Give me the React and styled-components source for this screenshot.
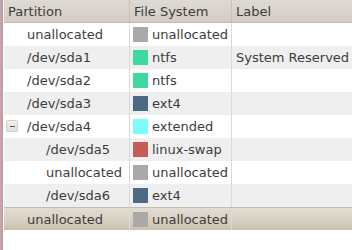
import React from 'react'
import styled, { createGlobalStyle } from 'styled-components'

const Global = createGlobalStyle`
  html, body {
    margin: 0;
    padding: 0;
    background: #fff;
  }
  body {
    font-family: "DejaVu Sans", "Liberation Sans", sans-serif;
    font-size: 13px;
    color: #3c3c3c;
  }
`

const COLS = '126px 102px 1fr'

const Frame = styled.div`
  width: 352px;
  height: 250px;
  display: flex;
  overflow: hidden;
  background: #fff;
`

const Edge = styled.div`
  width: 2px;
  background: #caa3aa;
  border-right: 1px solid #a8a0a0;
`

const Table = styled.div`
  flex: 1;
  display: flex;
  flex-direction: column;
  padding-left: 1px;
`

const HeaderRow = styled.div`
  display: grid;
  grid-template-columns: ${COLS};
  height: 23px;
  background: linear-gradient(#dedad3, #d3cdc4);
  border-bottom: 1px solid #c2bbb0;
  box-sizing: border-box;
`

const HeaderCell = styled.div`
  display: flex;
  align-items: center;
  padding-left: 4px;
  color: #3e3c38;
  border-right: ${p => (p.last ? 'none' : '1px solid #c8c2b8')};
`

const Row = styled.div`
  display: grid;
  grid-template-columns: ${COLS};
  height: 23px;
  background: ${p =>
    p.selected
      ? 'linear-gradient(#e2dcd2, #d8cfc1 60%, #cbbfac)'
      : p.alt
      ? '#efefef'
      : '#fff'};
  border-top: ${p => (p.selected ? '1px solid #c4bcb0' : 'none')};
  box-sizing: border-box;
`

const Cell = styled.div`
  display: flex;
  align-items: center;
  position: relative;
  padding-left: ${p => p.indent || 4}px;
  border-right: ${p => (p.last ? 'none' : '1px solid #dadada')};
  white-space: nowrap;
`

const Expander = styled.div`
  position: absolute;
  left: 2px;
  top: 5px;
  width: 12px;
  height: 12px;
  box-sizing: border-box;
  border: 1px solid #d2cec8;
  border-radius: 2px;
  background: linear-gradient(#f2f0ed, #e2ded8);
  &::after {
    content: '';
    position: absolute;
    left: 3px;
    top: 5px;
    width: 5px;
    height: 1px;
    background: #555;
  }
`

const Swatch = styled.span`
  width: 15px;
  height: 15px;
  margin-right: 4px;
  background: ${p => p.color};
  flex: none;
`

const FS_COLORS = {
  unallocated: '#a9a9a9',
  ntfs: '#3fd9a0',
  ext4: '#4b6983',
  extended: '#7dfcfe',
  'linux-swap': '#c65d55',
}

const rows = [
  { name: 'unallocated', fs: 'unallocated', level: 0 },
  { name: '/dev/sda1', fs: 'ntfs', label: 'System Reserved', level: 0 },
  { name: '/dev/sda2', fs: 'ntfs', level: 0 },
  { name: '/dev/sda3', fs: 'ext4', level: 0 },
  { name: '/dev/sda4', fs: 'extended', level: 0, expander: true },
  { name: '/dev/sda5', fs: 'linux-swap', level: 1 },
  { name: 'unallocated', fs: 'unallocated', level: 1 },
  { name: '/dev/sda6', fs: 'ext4', level: 1 },
  { name: 'unallocated', fs: 'unallocated', level: 0, selected: true },
]

const App = () => (
  <Frame>
    <Global />
    <Edge />
    <Table>
      <HeaderRow>
        <HeaderCell>Partition</HeaderCell>
        <HeaderCell>File System</HeaderCell>
        <HeaderCell last>Label</HeaderCell>
      </HeaderRow>
      {rows.map((r, i) => (
        <Row key={i} alt={i % 2 === 1} selected={r.selected}>
          <Cell indent={r.level ? 42 : 23}>
            {r.expander && <Expander />}
            {r.name}
          </Cell>
          <Cell indent={3}>
            <Swatch color={FS_COLORS[r.fs]} />
            {r.fs}
          </Cell>
          <Cell last>{r.label}</Cell>
        </Row>
      ))}
    </Table>
  </Frame>
)

export default App
